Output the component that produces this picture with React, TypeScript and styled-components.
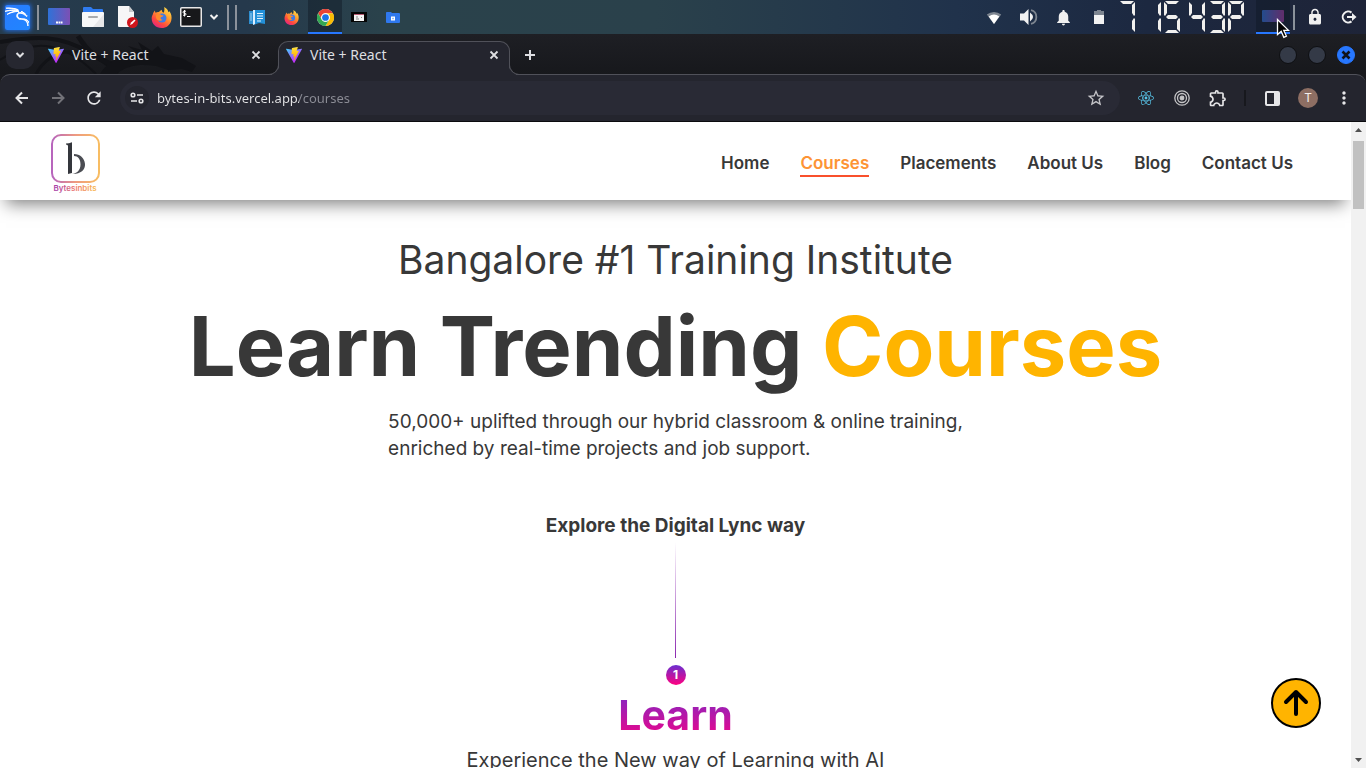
import React from "react";
import styled, { createGlobalStyle, css } from "styled-components";
import { SiKalilinux } from "react-icons/si";
import { FaReact } from "react-icons/fa";
import {
  MdLock,
  MdMoreVert,
  MdNotifications,
  MdOutlineExtension,
  MdRefresh,
  MdStarBorder,
} from "react-icons/md";

const GlobalStyle = createGlobalStyle`
  *, *::before, *::after { box-sizing: border-box; }
  body { margin: 0; background: #fff; }
  button { border: 0; padding: 0; background: none; color: inherit; font: inherit; }
  svg { display: block; flex: none; }
`;

const ink = "#383838";
const chromeBg = "#24252e";
const chromeLine = "#505159";

const Desktop = styled.div`
  display: flex;
  flex-direction: column;
  height: 100vh;
  overflow: hidden;
  font-family: Inter, "Liberation Sans", sans-serif;
`;

/* ---------- system panel ---------- */

const Panel = styled.header`
  display: flex;
  justify-content: space-between;
  flex: none;
  height: 34px;
  color: #f0f0f0;
  background: linear-gradient(90deg, #263b4c 0%, #25394c 18%, #2a424b 28%, #2a414b 48%, #20324b 70%, #1c2840 84%, #1e2438 100%);
`;

const PanelGroup = styled.div`
  display: flex;
  align-items: stretch;
`;

const Slot = styled.button<{ $width?: number; $active?: boolean }>`
  display: flex;
  align-items: center;
  justify-content: center;
  width: ${(p) => p.$width ?? 34}px;
  ${(p) =>
    p.$active &&
    css`
      background: rgba(16, 24, 36, 0.45);
      border-bottom: 2px solid #2777ff;
      padding-top: 2px;
    `}
`;

const Divider = styled.span`
  width: 8px;
  display: flex;
  justify-content: center;
  align-items: center;
  &::before {
    content: "";
    width: 2px;
    height: 25px;
    background: #8b929b;
  }
`;

const KaliTile = styled.span`
  display: grid;
  place-items: center;
  width: 25px;
  height: 25px;
  border-radius: 2px;
  color: #fff;
  background: linear-gradient(135deg, #2a7bff, #1f86ff);
  box-shadow: 0 0 4px 1px #2369d8;
`;

const Clock = styled.div`
  width: 140px;
`;

/* ---------- browser chrome ---------- */

const TabStrip = styled.div`
  position: relative;
  display: flex;
  flex: none;
  height: 40px;
  padding: 7px 11px 0 6px;
  color: #dedfe2;
  background: linear-gradient(#1e1f24, #17181c);
`;

const StripArt = styled.svg`
  position: absolute;
  left: 0;
  top: 0;
`;

const TabSearch = styled.button`
  position: relative;
  display: grid;
  place-items: center;
  width: 28px;
  height: 28px;
  border-radius: 10px;
  background: #262730;
`;

const Tab = styled.div<{ $active?: boolean }>`
  position: relative;
  display: flex;
  align-items: center;
  gap: 8px;
  width: ${(p) => (p.$active ? 232 : 238)}px;
  height: 28px;
  padding: 0 ${(p) => (p.$active ? 7 : 14)}px 0 ${(p) => (p.$active ? 7 : 8)}px;
  margin-left: 6px;
  font: 400 14px/20px "Noto Sans", sans-serif;
  ${(p) =>
    p.$active &&
    css`
      z-index: 1;
      height: 34px;
      margin-left: 0;
      padding-bottom: 7px;
      background: ${chromeBg};
      border: 1px solid ${chromeLine};
      border-bottom: 0;
      border-radius: 10px 10px 0 0;
      &::before,
      &::after {
        content: "";
        position: absolute;
        bottom: 0;
        width: 10px;
        height: 10px;
        border-bottom: 1px solid ${chromeLine};
      }
      &::before {
        left: -10px;
        border-right: 1px solid ${chromeLine};
        border-bottom-right-radius: 10px;
        box-shadow: 3px 3px 0 ${chromeBg};
        clip-path: inset(0);
      }
      &::after {
        right: -10px;
        border-left: 1px solid ${chromeLine};
        border-bottom-left-radius: 10px;
        box-shadow: -3px 3px 0 ${chromeBg};
        clip-path: inset(0);
      }
    `}
`;

const TabTitle = styled.span`
  flex: 1;
  white-space: nowrap;
`;

const TabClose = styled.button`
  display: grid;
  place-items: center;
  width: 16px;
  height: 16px;
`;

const NewTab = styled.button`
  display: grid;
  place-items: center;
  width: 40px;
  height: 28px;
`;

const WindowControls = styled.div`
  display: flex;
  align-items: center;
  gap: 11px;
  height: 28px;
  margin-left: auto;
`;

const WindowButton = styled.button<{ $close?: boolean }>`
  display: grid;
  place-items: center;
  width: 18px;
  height: 18px;
  border-radius: 50%;
  color: #10131a;
  background: ${(p) => (p.$close ? "#2777ff" : "#343a47")};
  border: 1px solid ${(p) => (p.$close ? "#2777ff" : "#0e0f12")};
`;

const ChromeBack = styled.div`
  flex: none;
  background: #18191d;
`;

const Toolbar = styled.div`
  display: flex;
  align-items: center;
  height: 48px;
  padding: 0 4px 1px;
  color: #e6e6e8;
  background: ${chromeBg};
  border: 1px solid ${chromeLine};
  border-width: 1px 0 0;
  border-radius: 10px 10px 0 0;
  box-shadow: inset 0 -1px 0 #0b0b0e;
`;

const ToolButton = styled.button<{ $dim?: boolean }>`
  display: grid;
  place-items: center;
  width: 36px;
  height: 34px;
  opacity: ${(p) => (p.$dim ? 0.4 : 1)};
`;

const Omnibox = styled.form`
  display: flex;
  align-items: center;
  flex: 1;
  height: 34px;
  margin: 0 8px;
  padding: 0 6px 0 5px;
  border-radius: 17px;
  background: #292a35;
`;

const SiteInfo = styled.button`
  display: grid;
  place-items: center;
  width: 24px;
  height: 24px;
  border-radius: 50%;
  background: #24252e;
`;

const Address = styled.input`
  flex: 1;
  min-width: 0;
  margin-left: 8px;
  padding: 0;
  border: 0;
  outline: 0;
  font: 400 13px/20px "Noto Sans", sans-serif;
  color: transparent;
  background: linear-gradient(90deg, #e6e6e8 142px, #8c8d96 142px);
  background-clip: text;
  -webkit-background-clip: text;
`;

const ToolDivider = styled.span`
  width: 2px;
  height: 16px;
  margin: 0 8px;
  background: #17181d;
`;

const Avatar = styled.span`
  display: grid;
  place-items: center;
  width: 20px;
  height: 20px;
  border-radius: 50%;
  color: #f4efed;
  background: #8d6e63;
  font: 400 12px/20px Roboto, sans-serif;
`;

/* ---------- page ---------- */

const Viewport = styled.div`
  display: flex;
  flex: 1;
  min-height: 0;
  background: #fff;
`;

const Page = styled.div`
  position: relative;
  flex: 1;
  min-width: 0;
  overflow: hidden;
  color: ${ink};
`;

const SiteHeader = styled.header`
  display: flex;
  align-items: center;
  justify-content: space-between;
  height: 78px;
  padding: 0 58px 0 50px;
  background: #fff;
  box-shadow: 0 10px 16px -6px rgba(0, 0, 0, 0.5);
`;

const Brand = styled.a`
  display: block;
  margin-top: 6px;
`;

const Nav = styled.nav`
  display: flex;
  gap: 31px;
  margin-top: 6px;
`;

const NavLink = styled.a<{ $current?: boolean }>`
  font-size: 17px;
  font-weight: 600;
  line-height: 24px;
  text-decoration: none;
  color: ${(p) => (p.$current ? "#fd9435" : ink)};
  border-bottom: 2px solid ${(p) => (p.$current ? "#f9502c" : "transparent")};
`;

const Hero = styled.main`
  display: flex;
  flex-direction: column;
  align-items: center;
  padding-top: 30px;
`;

const Kicker = styled.h2`
  margin: 0;
  font-size: 39px;
  font-weight: 400;
  line-height: 60px;
`;

const Headline = styled.h1`
  margin: 0 0 6px;
  font-size: 83px;
  font-weight: 700;
  line-height: 112px;
  white-space: nowrap;
`;

const Accent = styled.span`
  color: #ffb400;
`;

const Lead = styled.p`
  margin: 0 0 50px;
  font-size: 19px;
  line-height: 27px;
`;

const Explore = styled.h3`
  margin: 0;
  font-size: 19px;
  font-weight: 700;
  line-height: 28px;
`;

const Thread = styled.span`
  width: 1px;
  height: 116px;
  margin: 2px 0 7px;
  background: linear-gradient(rgba(131, 39, 176, 0), #8b27b0);
`;

const StepNumber = styled.span`
  width: 20px;
  height: 20px;
  border-radius: 50%;
  color: #fff;
  background: linear-gradient(#6a2fd0, #ff0080);
  font-size: 12px;
  font-weight: 700;
  line-height: 19px;
  text-align: center;
`;

const StepTitle = styled.h2`
  margin: 0;
  font-size: 41px;
  font-weight: 700;
  line-height: 60px;
  color: transparent;
  background: linear-gradient(#6a2fd0, #ff0080);
  background-clip: text;
  -webkit-background-clip: text;
`;

const StepText = styled.p`
  margin: 0;
  font-size: 20px;
  line-height: 30px;
`;

const ToTop = styled.button`
  position: absolute;
  right: 30px;
  bottom: 40px;
  display: grid;
  place-items: center;
  width: 50px;
  height: 50px;
  border: 2px solid #000;
  border-radius: 50%;
  background: #ffb400;
`;

const ScrollBar = styled.div`
  display: flex;
  flex-direction: column;
  justify-content: space-between;
  align-items: center;
  flex: none;
  width: 15px;
  padding: 6px 0;
  background: #f1f1f1;
`;

const Thumb = styled.span`
  width: 11px;
  height: 68px;
  margin: 9px 0 auto;
  background: #c1c1c1;
`;

const PointerHost = styled.span`
  position: relative;
  display: block;
`;

const Pointer = styled.svg`
  position: absolute;
  left: 14px;
  top: 10px;
  z-index: 3;
`;

/* ---------- drawings ---------- */

const Stroke = ({ size, width, d }: { size: number; width: number; d: string }) => (
  <svg width={size} height={size} viewBox={`0 0 ${size} ${size}`} fill="none" stroke="currentColor" strokeWidth={width} aria-hidden="true">
    <path d={d} />
  </svg>
);

const Cross = ({ bold }: { bold?: boolean }) => (
  <Stroke size={10} width={bold ? 2.6 : 1.8} d="M1.500 1.500l7 7M8.500 1.500l-7 7" />
);
const Chevron = () => <Stroke size={10} width={2} d="M1.500 3L5 6.500 8.500 3" />;
const Plus = () => <Stroke size={12} width={2} d="M6 1v10M1 6h10" />;
const Back = () => <Stroke size={14} width={2} d="M13 7H2M7 1.500L1.500 7 7 12.500" />;
const Forward = () => <Stroke size={14} width={2} d="M1 7h11M7 1.500L12.500 7 7 12.500" />;

const ViteLogo = ({ id }: { id: string }) => (
  <svg width="16" height="16" viewBox="0 0 256 257" aria-hidden="true">
    <defs>
      <linearGradient id={`${id}a`} x1="0" x2=".58" y1="0" y2=".79">
        <stop offset="0" stopColor="#41D1FF" />
        <stop offset="1" stopColor="#BD34FE" />
      </linearGradient>
      <linearGradient id={`${id}b`} x1=".43" x2=".5" y1=".02" y2=".89">
        <stop offset="0" stopColor="#FFEA83" />
        <stop offset=".08" stopColor="#FFDD35" />
        <stop offset="1" stopColor="#FFA800" />
      </linearGradient>
    </defs>
    <path fill={`url(#${id}a)`} d="M255.153 37.938L134.897 252.976c-2.483 4.44-8.862 4.466-11.382.048L.875 37.958c-2.746-4.814 1.371-10.646 6.827-9.67l120.385 21.517a6.537 6.537 0 0 0 2.322-.004l117.867-21.483c5.438-.991 9.574 4.796 6.877 9.62Z" />
    <path fill={`url(#${id}b)`} d="M185.432.063L96.44 17.501a3.268 3.268 0 0 0-2.634 3.014l-5.474 92.456a3.268 3.268 0 0 0 3.997 3.378l24.777-5.718c2.318-.535 4.413 1.507 3.936 3.838l-7.361 36.047c-.495 2.426 1.782 4.5 4.151 3.78l15.304-4.649c2.372-.72 4.652 1.36 4.15 3.788l-11.698 56.621c-.732 3.542 3.979 5.473 5.943 2.437l1.313-2.028l72.516-144.72c1.215-2.423-.88-5.186-3.54-4.672l-25.505 4.922c-2.396.462-4.435-1.77-3.759-4.114l16.646-57.705c.677-2.35-1.37-4.583-3.769-4.113Z" />
  </svg>
);

const Firefox = ({ size, id }: { size: number; id: string }) => (
  <svg width={size} height={size} viewBox="0 0 24 24" aria-hidden="true">
    <defs>
      <linearGradient id={id} x1=".85" y1=".05" x2=".25" y2=".95">
        <stop offset="0" stopColor="#ffe14d" />
        <stop offset=".4" stopColor="#ff9a2e" />
        <stop offset=".75" stopColor="#ff4a3d" />
        <stop offset="1" stopColor="#e5297b" />
      </linearGradient>
    </defs>
    <path fill={`url(#${id})`} d="M2 8.500C2.400 6.700 3.500 5 4.500 4c0 1 .3 1.800.8 2.500C6.500 5.700 8 5.600 9.200 5.800 10 4.300 11 3.500 12.500 3c-.5 1.500.5 2.500 2 3.500 1-2 1-4.500.5-6.500 3.500 1.800 4.500 4 5 6 .7-.2.900-.8.900-1.500 2.500 3.500 3.100 7 2.300 10.500C22 20.500 17.500 24 12 24 5.500 24 1 19.500.8 13.500.7 11.500 1.200 9.800 2 8.500z" />
    <circle cx="12.500" cy="12.500" r="5.200" fill="#3c7be8" />
    <path fill="#ff8a2b" d="M6 8.500c2-.8 4.500-.3 5.800.8 1.200 0 2.200.2 2.500.5-.5 1.300-2.200 1.500-3.300 2.200-.5 1.500 1 2.800 2.600 2.400-1.800 2.200-6 1.800-7.400-1C5.500 11.500 5.600 9.800 6 8.500z" />
  </svg>
);

const Chrome = () => (
  <svg width="17" height="17" viewBox="0 0 48 48" aria-hidden="true">
    <circle cx="24" cy="24" r="24" fill="#fff" />
    <path fill="#ea4335" d="M3.200 12A24 24 0 0 1 44.800 12H24a12 12 0 0 0-10.400 18z" />
    <path fill="#fbbc04" d="M44.800 12A24 24 0 0 1 24 48l10.400-18A12 12 0 0 0 24 12z" />
    <path fill="#34a853" d="M24 48A24 24 0 0 1 3.200 12l10.400 18a12 12 0 0 0 20.800 0z" />
    <circle cx="24" cy="24" r="12" fill="#fff" />
    <circle cx="24" cy="24" r="9.500" fill="#1a73e8" />
  </svg>
);

const DesktopIcon = ({ dark }: { dark?: boolean }) => (
  <svg width="22" height="18" viewBox="0 0 22 18" opacity={dark ? 0.55 : 1} aria-hidden="true">
    <defs>
      <linearGradient id={dark ? "dk2" : "dk1"} x1="0" x2="1">
        <stop offset="0" stopColor="#2f72d8" />
        <stop offset="1" stopColor={dark ? "#a03a9c" : "#7c50b4"} />
      </linearGradient>
    </defs>
    <rect y={dark ? 2 : 0} width="22" height={dark ? 12 : 17} rx="1" fill={`url(#${dark ? "dk2" : "dk1"})`} />
    {!dark && <path d="M8 14.500h2M10.500 14.500h2M13 14.500h1.500" stroke="#fff" strokeWidth="1.800" />}
  </svg>
);

const FolderIcon = () => (
  <svg width="22" height="20" viewBox="0 0 22 20" aria-hidden="true">
    <path d="M1 1q0-1 1-1h7l2 2h9q1 0 1 1v4H1z" fill="#2f7bf0" />
    <rect y="5" width="22" height="15" rx="1" fill="#f7f7f8" />
    <path d="M22 7v12q0 1-1 1H11z" fill="#e6e6e8" />
    <rect x="6" y="9" width="10" height="2" rx="1" fill="#a9abae" />
  </svg>
);

const EditorIcon = () => (
  <svg width="22" height="22" viewBox="0 0 22 22" aria-hidden="true">
    <path d="M2 0h11l5 6v14q0 1-1 1H3q-1 0-1-1V1q0-1 0-1z" fill="#f6f6f7" />
    <path d="M13 0l5 6h-5z" fill="#c6c8cb" />
    <circle cx="16.500" cy="16.500" r="5.500" fill="#d0151c" />
    <path d="M14 19l1-2.500 3.500-3 1 1-3.200 3.500z" fill="#fff" />
  </svg>
);

const TerminalIcon = () => (
  <svg width="22" height="20" viewBox="0 0 22 20" aria-hidden="true">
    <rect x=".75" y=".75" width="20.500" height="18.500" rx="1" fill="#17181a" stroke="#e8e8e8" strokeWidth="1.500" />
    <path d="M6 4.200H4q-1 0-1 1t1 1h1q1 0 1 1t-1 1H3M4.500 3v6.500M7 9.500h3.500" stroke="#fff" fill="none" />
  </svg>
);

const NotesIcon = () => (
  <svg width="16" height="15" viewBox="0 0 16 15" aria-hidden="true">
    <path d="M0 1h4v13H0z" fill="#2f8fd0" />
    <path d="M4 0h12v14l-6-1-6 2z" fill="#2390d8" />
    <path d="M4 0h2v14l-2 1z" fill="#dcefff" />
    <path d="M2 3v8" stroke="#9fd0f4" />
    <path d="M8 3.500h6M8 6h6M8 8.500h6M8 11h4" stroke="#e6f4ff" strokeWidth="1.200" />
  </svg>
);

const ShotIcon = () => (
  <svg width="16" height="10" viewBox="0 0 16 10" aria-hidden="true">
    <path fill="#050505" d="M0 0h16v10H0z" />
    <path fill="#f4f4f4" d="M3 3h10v6H3z" />
    <path d="M3 2.500h10" stroke="#b75b73" />
    <path d="M5 5h2M5 7h3M10 5.500h1" stroke="#888" />
  </svg>
);

const LockedFolder = () => (
  <svg width="14" height="12" viewBox="0 0 14 12" aria-hidden="true">
    <path d="M0 1.500Q0 1 1 1h4l1 1h7q1 0 1 1v8q0 1-1 1H1q-1 0-1-1z" fill="#2f78ee" />
    <path d="M5 5.500h4v4H5z" fill="#fff" />
    <path d="M7 6.800v1.400" stroke="#2f78ee" />
  </svg>
);

const Wifi = () => (
  <svg width="16" height="14" viewBox="0 0 16 14" aria-hidden="true">
    <path d="M8 14L.8 4.500a11.500 11.500 0 0 1 14.400 0z" fill="#7d8590" />
    <path d="M8 14L2.700 6.500a9 9 0 0 1 10.600 0z" fill="#fff" />
  </svg>
);

const Volume = () => (
  <svg width="18" height="16" viewBox="0 0 18 16" aria-hidden="true">
    <path d="M0 4.500h4L8.500 0v16L4 11.500H0z" fill="#f2f2f2" />
    <path d="M10 3.500q6 4.500 0 9z" fill="#f2f2f2" />
    <path d="M11 1.200a7 7 0 0 1 0 13.600" fill="none" stroke="#7d8590" strokeWidth="1.800" />
  </svg>
);

const Battery = () => (
  <svg width="10" height="14" viewBox="0 0 10 14" aria-hidden="true">
    <path d="M3 0h4v1h3v5H0V1h3z" fill="#7d8590" />
    <path d="M0 5h10v9H0z" fill="#f2f2f2" />
  </svg>
);

const LogOut = () => (
  <svg width="16" height="14" viewBox="0 0 16 14" aria-hidden="true">
    <path d="M10.500 2.600A5.500 5.500 0 1 0 10.500 11.400" fill="none" stroke="#f0f0f0" strokeWidth="2" />
    <path d="M6 6h5V3l4.500 4-4.500 4V8H6z" fill="#f0f0f0" />
  </svg>
);

/* Which of the seven bars each character of the clock lights up. */
const segments: Record<string, string> = {
  "7": "abc",
  "1": "bc",
  "5": "afgcd",
  "4": "fgbc",
  "3": "abgcd",
  P: "abefg",
};
const bars: Record<string, string> = {
  a: "1,0 15,0 12,3 4,3",
  b: "16,1 16,14 15,15 13,12 13,4",
  c: "16,18 16,31 13,28 13,20 15,17",
  d: "4,29 12,29 15,32 1,32",
  e: "0,18 0,31 3,28 3,20 1,17",
  f: "0,1 0,14 1,15 3,12 3,4",
  g: "4,14 12,14 14,16 12,18 4,18 2,16",
};
const clockCells: [string, number][] = [
  ["7", 3],
  ["1", 29],
  ["5", 48],
  ["4", 73],
  ["3", 93],
  ["P", 112],
];

const LcdClock = () => (
  <svg width="140" height="34" viewBox="0 0 140 34" role="img" aria-label="7:15:43 PM">
    {clockCells.map(([char, x]) => (
      <g key={char} transform={`translate(${x} 1)`} fill="#f1f0ee">
        {segments[char].split("").map((bar) => (
          <polygon key={bar} points={bars[bar]} />
        ))}
      </g>
    ))}
  </svg>
);

const Dragon = () => (
  <StripArt width="220" height="40" viewBox="0 0 220 40" aria-hidden="true">
    <g fill="none" stroke="#121317" strokeWidth="4">
      <path d="M0 8C35 2 60 0 92 20S110 38 118 40" />
      <path d="M0 26C30 6 60 4 96 40" strokeWidth="2" />
      <path d="M36 40C52 12 80 12 110 30" strokeWidth="3" />
      <path d="M78 2C88 18 98 26 112 30" strokeWidth="5" />
    </g>
    <path d="M100 40C108 26 122 22 136 18l-8-6 14 4-4-8 14 9 6-5 6 8 18 4 14 8-4 6-10-3-14 1-12-4c-16-2-30-2-44 12z" fill="#121317" />
  </StripArt>
);

const Tune = () => (
  <svg width="14" height="12" viewBox="0 0 14 12" fill="none" stroke="#e6e6e8" strokeWidth="1.600" aria-hidden="true">
    <circle cx="3" cy="3" r="1.800" />
    <path d="M7 3h6M1 9h6" />
    <circle cx="11" cy="9" r="1.800" />
  </svg>
);

const Rings = () => (
  <svg width="16" height="16" viewBox="0 0 16 16" fill="none" stroke="#c4c4c6" strokeWidth="1.300" aria-hidden="true">
    <circle cx="8" cy="8" r="7.200" />
    <circle cx="8" cy="8" r="4.500" />
    <circle cx="8" cy="8" r="1.800" fill="#c4c4c6" />
  </svg>
);

const SidePanel = () => (
  <svg width="15" height="15" viewBox="0 0 15 15" aria-hidden="true">
    <rect x="1" y="1" width="13" height="13" rx="1" fill="none" stroke="#e6e6e8" strokeWidth="2" />
    <path d="M9 1h5v13H9z" fill="#e6e6e8" />
  </svg>
);

const LogoArt = () => (
  <svg width="52" height="60" viewBox="0 0 52 60" role="img" aria-label="Bytesinbits">
    <defs>
      <linearGradient id="brand" x1="0" x2="1">
        <stop offset="0" stopColor="#b765bd" />
        <stop offset=".5" stopColor="#ee9a80" />
        <stop offset="1" stopColor="#f8bd62" />
      </linearGradient>
      <linearGradient id="brandText" x1="0" x2="1">
        <stop offset="0" stopColor="#a13fae" />
        <stop offset=".5" stopColor="#ee7a70" />
        <stop offset="1" stopColor="#f8bd50" />
      </linearGradient>
    </defs>
    <rect x="2" y="1" width="47" height="47" rx="9" fill="none" stroke="url(#brand)" strokeWidth="2" />
    <path d="M16 9.500q3 0 6-1.200V39l-4 1V12q0-1.500-2-1.500z" fill="#34363c" />
    <path d="M24 20c6 0 10.500 4 11 10S30 40.500 22 40c5-.5 8.500-4 8.500-9.500S28 22 24 22z" fill="#4b4d53" />
    <text x="25" y="57" textAnchor="middle" fontSize="8" fontWeight="600" fontFamily="Inter, sans-serif" fill="url(#brandText)">
      Bytesinbits
    </text>
  </svg>
);

const ArrowUp = () => (
  <svg width="26" height="28" viewBox="0 0 26 28" fill="none" stroke="#000" strokeWidth="4" strokeLinecap="round" strokeLinejoin="round" aria-hidden="true">
    <path d="M13 25V3M3 13L13 3l10 10" />
  </svg>
);

const navItems = ["Home", "Courses", "Placements", "About Us", "Blog", "Contact Us"];

export default function App() {
  return (
    <Desktop>
      <GlobalStyle />
      <Panel>
        <PanelGroup>
          <Slot aria-label="Applications">
            <KaliTile>
              <SiKalilinux size={24} stroke="#fff" strokeWidth={1} />
            </KaliTile>
          </Slot>
          <Divider />
          <Slot aria-label="Show desktop"><DesktopIcon /></Slot>
          <Slot aria-label="Files"><FolderIcon /></Slot>
          <Slot aria-label="Text editor"><EditorIcon /></Slot>
          <Slot aria-label="Firefox"><Firefox size={21} id="ff1" /></Slot>
          <Slot $width={26} aria-label="Terminal"><TerminalIcon /></Slot>
          <Slot $width={20} aria-label="More terminals"><Chevron /></Slot>
          <Divider />
          <Divider />
          <Slot aria-label="Notes"><NotesIcon /></Slot>
          <Slot aria-label="Firefox window"><Firefox size={15} id="ff2" /></Slot>
          <Slot $active aria-label="Chrome window"><Chrome /></Slot>
          <Slot aria-label="Screenshot"><ShotIcon /></Slot>
          <Slot aria-label="Private files"><LockedFolder /></Slot>
        </PanelGroup>
        <PanelGroup>
          <Slot $width={35} aria-label="Network"><Wifi /></Slot>
          <Slot $width={35} aria-label="Volume"><Volume /></Slot>
          <Slot $width={35} aria-label="Notifications"><MdNotifications size={19} /></Slot>
          <Slot $width={35} aria-label="Battery"><Battery /></Slot>
          <Clock><LcdClock /></Clock>
          <Slot $active aria-label="Workspace">
            <PointerHost>
              <DesktopIcon dark />
              <Pointer width="14" height="21" viewBox="0 0 14 21" aria-hidden="true">
                <path d="M1.500 1.500v15l3.700-3.200 2.600 6 2.600-1.200-2.600-5.700h4.700z" fill="#000" stroke="#fff" strokeWidth="1.300" />
              </Pointer>
            </PointerHost>
          </Slot>
          <Divider />
          <Slot aria-label="Lock screen"><MdLock size={18} /></Slot>
          <Slot aria-label="Log out"><LogOut /></Slot>
        </PanelGroup>
      </Panel>

      <TabStrip>
        <Dragon />
        <TabSearch aria-label="Search tabs"><Chevron /></TabSearch>
        <Tab>
          <ViteLogo id="v1" />
          <TabTitle>Vite + React</TabTitle>
          <TabClose aria-label="Close tab"><Cross /></TabClose>
        </Tab>
        <Tab $active>
          <ViteLogo id="v2" />
          <TabTitle>Vite + React</TabTitle>
          <TabClose aria-label="Close tab"><Cross /></TabClose>
        </Tab>
        <NewTab aria-label="New tab"><Plus /></NewTab>
        <WindowControls>
          <WindowButton aria-label="Minimize" />
          <WindowButton aria-label="Maximize" />
          <WindowButton $close aria-label="Close"><Cross bold /></WindowButton>
        </WindowControls>
      </TabStrip>

      <ChromeBack>
        <Toolbar>
          <ToolButton aria-label="Back"><Back /></ToolButton>
          <ToolButton $dim aria-label="Forward"><Forward /></ToolButton>
          <ToolButton aria-label="Reload"><MdRefresh size={20} /></ToolButton>
          <Omnibox>
            <SiteInfo type="button" aria-label="Site information"><Tune /></SiteInfo>
            <Address aria-label="Address" defaultValue="bytes-in-bits.vercel.app/courses" />
            <ToolButton type="button" aria-label="Bookmark"><MdStarBorder size={20} color="#c4c4c8" /></ToolButton>
          </Omnibox>
          <ToolButton aria-label="React Developer Tools"><FaReact size={16} color="#58c4e8" /></ToolButton>
          <ToolButton aria-label="Recorder"><Rings /></ToolButton>
          <ToolButton aria-label="Extensions"><MdOutlineExtension size={20} /></ToolButton>
          <ToolDivider />
          <ToolButton aria-label="Side panel"><SidePanel /></ToolButton>
          <ToolButton aria-label="Profile"><Avatar>T</Avatar></ToolButton>
          <ToolButton aria-label="Menu"><MdMoreVert size={20} /></ToolButton>
        </Toolbar>
      </ChromeBack>

      <Viewport>
        <Page>
          <SiteHeader>
            <Brand href="#home"><LogoArt /></Brand>
            <Nav>
              {navItems.map((item) => (
                <NavLink key={item} href="#" $current={item === "Courses"}>
                  {item}
                </NavLink>
              ))}
            </Nav>
          </SiteHeader>
          <Hero>
            <Kicker>Bangalore #1 Training Institute</Kicker>
            <Headline>
              Learn Trending <Accent>Courses</Accent>
            </Headline>
            <Lead>
              50,000+ uplifted through our hybrid classroom &amp; online training,
              <br />
              enriched by real-time projects and job support.
            </Lead>
            <Explore>Explore the Digital Lync way</Explore>
            <Thread />
            <StepNumber>1</StepNumber>
            <StepTitle>Learn</StepTitle>
            <StepText>Experience the New way of Learning with AI</StepText>
          </Hero>
          <ToTop aria-label="Back to top"><ArrowUp /></ToTop>
        </Page>
        <ScrollBar aria-hidden="true">
          <svg width="7" height="4" viewBox="0 0 7 4"><path d="M0 4h7L3.500 0z" fill="#505050" /></svg>
          <Thumb />
          <svg width="7" height="4" viewBox="0 0 7 4"><path d="M0 0h7L3.500 4z" fill="#505050" /></svg>
        </ScrollBar>
      </Viewport>
    </Desktop>
  );
}
